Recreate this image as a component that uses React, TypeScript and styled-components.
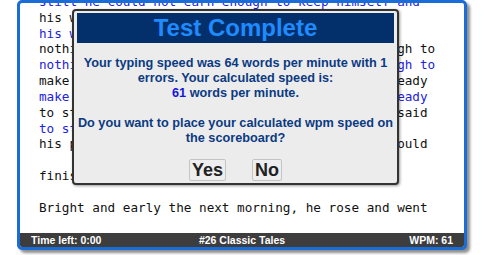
import styled, { createGlobalStyle } from "styled-components"

const GlobalStyle = createGlobalStyle`
  html, body {
    margin: 0;
    padding: 0;
    background: #ffffff;
  }
`

const lines: { text: string; typed?: boolean }[] = [
  { text: "still he could not earn enough to keep himself and", typed: true },
  { text: "his wife. At last he had nothing in the world," },
  { text: "his wife. At last he had nothing in the world,", typed: true },
  { text: "nothing left in the world but just leather enough to" },
  { text: "nothing left in the world but just leather enough to", typed: true },
  { text: "make one pair of shoes. Then he cut them out, ready" },
  { text: "make one pair of shoes. Then he cut them out, ready", typed: true },
  { text: "to stitch in the morning. Then he lay down and said" },
  { text: "to stitch in the morning. Then he", typed: true },
  { text: "his prayers, and fell asleep, wishing that he could" },
  { text: "", typed: true },
  { text: "finish them." },
  { text: "", typed: true },
  { text: "Bright and early the next morning, he rose and went" },
  { text: "", typed: true },
]

const App = () => {
  return (
    <>
      <GlobalStyle />
      <Page>
        <Frame>
          <TextArea>
            <Lines>
              {lines.map((line, i) => (
                <Line key={i} $typed={line.typed}>
                  {line.text || "\u00a0"}
                </Line>
              ))}
            </Lines>
            <Dialog>
              <TitleBar>Test Complete</TitleBar>
              <Message>
                Your typing speed was 64 words per minute with 1 errors. Your calculated speed is:
                <br />
                <Speed>61</Speed> words per minute.
              </Message>
              <Question>
                Do you want to place your calculated wpm speed on
                <br />
                the scoreboard?
              </Question>
              <Buttons>
                <DialogButton>Yes</DialogButton>
                <DialogButton>No</DialogButton>
              </Buttons>
            </Dialog>
          </TextArea>
          <StatusBar>
            <StatusLeft>Time left: 0:00</StatusLeft>
            <StatusCenter>#26 Classic Tales</StatusCenter>
            <StatusRight>WPM: 61</StatusRight>
          </StatusBar>
        </Frame>
      </Page>
    </>
  )
}

export default App

const Page = styled.div`
  width: 500px;
  height: 255px;
  padding-left: 17px;
  box-sizing: border-box;
  overflow: hidden;
`

const Frame = styled.div`
  width: 450px;
  height: 250px;
  box-sizing: border-box;
  border: 3px solid #1a6dd6;
  border-radius: 5px;
  background: #ffffff;
  box-shadow: 3px 3px 3px rgba(0, 0, 0, 0.45);
  display: flex;
  flex-direction: column;
  overflow: hidden;
`

const TextArea = styled.div`
  position: relative;
  flex: 1;
  overflow: hidden;
`

const Lines = styled.div`
  margin-top: -9px;
  padding-left: 19px;
  font-family: "DejaVu Sans Mono", monospace;
  font-size: 12.67px;
  line-height: 1.25;
  white-space: pre;
`

const Line = styled.div<{ $typed?: boolean }>`
  color: ${(p) => (p.$typed ? "#2222dd" : "#111111")};
`

const Dialog = styled.div`
  position: absolute;
  left: 52px;
  top: 6px;
  width: 327px;
  box-sizing: border-box;
  border: 2px solid #333333;
  border-radius: 4px;
  background: #ececec;
  padding: 2px 3px 2px;
  box-shadow: 1px 1px 3px rgba(0, 0, 0, 0.4);
  font-family: "Liberation Sans", Arial, sans-serif;
  font-weight: bold;
  text-align: center;
`

const TitleBar = styled.div`
  height: 30px;
  line-height: 30px;
  background: #03306b;
  color: #1e8bff;
  font-size: 24px;
`

const Message = styled.div`
  margin-top: 13px;
  font-size: 12.7px;
  line-height: 15px;
  color: #0b3a82;
`

const Speed = styled.span`
  color: #1515e0;
`

const Question = styled(Message)`
  margin-top: 15px;
`

const Buttons = styled.div`
  display: flex;
  justify-content: center;
  gap: 26px;
  margin-top: 13px;
`

const DialogButton = styled.button`
  height: 22px;
  padding: 0 2px;
  border: 1px solid #c4c4c4;
  border-radius: 2px;
  background: #eeeeee;
  color: #222222;
  font-family: "Liberation Sans", Arial, sans-serif;
  font-weight: bold;
  font-size: 18px;
  line-height: 20px;
`

const StatusBar = styled.div`
  height: 14px;
  background: #3d3d3d;
  color: #ffffff;
  display: grid;
  grid-template-columns: 1fr auto 1fr;
  align-items: center;
  padding: 0 11px;
  font-family: "Liberation Sans", Arial, sans-serif;
  font-weight: bold;
  font-size: 10.5px;
`

const StatusLeft = styled.div`
  text-align: left;
`

const StatusCenter = styled.div`
  text-align: center;
`

const StatusRight = styled.div`
  text-align: right;
`
